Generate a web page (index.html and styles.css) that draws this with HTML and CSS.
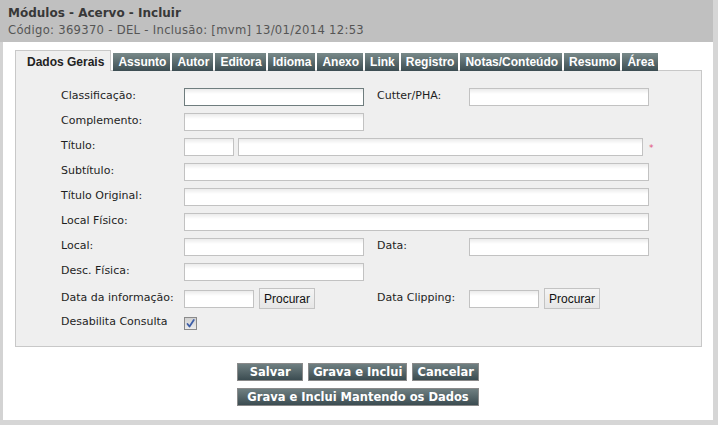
FILE: index.html
```html
<!DOCTYPE html>
<html lang="pt-BR">
<head>
<meta charset="utf-8">
<title>Módulos - Acervo - Incluir</title>
<link rel="stylesheet" href="styles.css">
</head>
<body>
<div class="window">
  <div class="header">
    <div class="title">Módulos - Acervo - Incluir</div>
    <div class="code">Código: 369370 - DEL - Inclusão: [mvm] 13/01/2014 12:53</div>
  </div>
  <div class="content">
    <div class="tabs">
      <span class="tab active">Dados Gerais</span>
      <span class="tab">Assunto</span>
      <span class="tab">Autor</span>
      <span class="tab">Editora</span>
      <span class="tab">Idioma</span>
      <span class="tab">Anexo</span>
      <span class="tab">Link</span>
      <span class="tab">Registro</span>
      <span class="tab">Notas/Conteúdo</span>
      <span class="tab">Resumo</span>
      <span class="tab">Área</span>
    </div>
    <div class="panel">
      <div class="form">
        <label class="lbl">Classificação:</label>
        <div class="field"><input class="inp w180 focus" type="text"></div>
        <label class="lbl rlbl">Cutter/PHA:</label>
        <div class="field"><input class="inp w180" type="text"></div>

        <label class="lbl">Complemento:</label>
        <div class="field span3"><input class="inp w180" type="text"></div>

        <label class="lbl">Título:</label>
        <div class="field span3"><input class="inp w50" type="text"><input class="inp w405" type="text"><span class="req">*</span></div>

        <label class="lbl">Subtítulo:</label>
        <div class="field span3"><input class="inp wfull" type="text"></div>

        <label class="lbl">Título Original:</label>
        <div class="field span3"><input class="inp wfull" type="text"></div>

        <label class="lbl">Local Físico:</label>
        <div class="field span3"><input class="inp wfull" type="text"></div>

        <label class="lbl">Local:</label>
        <div class="field"><input class="inp w180" type="text"></div>
        <label class="lbl rlbl">Data:</label>
        <div class="field"><input class="inp w180" type="text"></div>

        <label class="lbl">Desc. Física:</label>
        <div class="field span3"><input class="inp w180" type="text"></div>

        <label class="lbl">Data da informação:</label>
        <div class="field"><input class="inp w70" type="text"><button class="search" type="button">Procurar</button></div>
        <label class="lbl rlbl">Data Clipping:</label>
        <div class="field"><input class="inp w70" type="text"><button class="search" type="button">Procurar</button></div>

        <label class="lbl">Desabilita Consulta</label>
        <div class="field span3"><span class="check"><svg width="11" height="11" viewBox="0 0 11 11"><path d="M2.5 6 L4.5 8.5 L8.8 2" fill="none" stroke="#3d5ea8" stroke-width="1.8" stroke-linecap="round" stroke-linejoin="round"/></svg></span></div>
      </div>
    </div>
    <div class="actions">
      <div class="row">
        <button class="btn salvar" type="button">Salvar</button>
        <button class="btn" type="button">Grava e Inclui</button>
        <button class="btn" type="button">Cancelar</button>
      </div>
      <div class="row">
        <button class="btn wide" type="button">Grava e Inclui Mantendo os Dados</button>
      </div>
    </div>
  </div>
</div>
</body>
</html>
```
FILE: styles.css
```css
* { box-sizing: border-box; }
html, body { margin: 0; padding: 0; background: #ffffff; }
body { font-family: "DejaVu Sans", Verdana, sans-serif; font-size: 11px; color: #1e1e1e; }

.window {
  width: 718px;
  height: 425px;
  border-right: 5px solid #d6d6d6;
  border-bottom: 5px solid #d6d6d6;
  background: #ffffff;
}

.header {
  background: #c0c0c0;
  height: 42px;
  padding: 5px 8px 0 8px;
}
.title {
  font-weight: bold;
  font-size: 12px;
  line-height: 17px;
  color: #383838;
}
.code {
  font-size: 11.6px;
  letter-spacing: 0.3px;
  line-height: 16px;
  color: #555555;
}

.content {
  border-left: 3px solid #d3d3d3;
  height: 378px;
  padding: 8px 11px 0 12px;
}

.tabs {
  display: flex;
  align-items: flex-end;
  gap: 2px;
  position: relative;
  z-index: 1;
  margin-bottom: -1px;
}
.tab {
  font-family: "Liberation Sans", Arial, sans-serif;
  font-weight: bold;
  font-size: 12px;
  height: 18px;
  line-height: 18px;
  padding: 0 4px 0 5px;
  color: #ffffff;
  background: linear-gradient(#798a8a, #3c4d52);
}
.tab.active {
  height: 21px;
  padding: 2px 6px 0 11px;
  line-height: 18px;
  color: #222222;
  background: #efefef;
  border: 1px solid #c8c8c8;
  border-bottom: none;
}

.panel {
  background: #efefef;
  border: 1px solid #c8c8c8;
  height: 277px;
  padding: 17px 0 0 45px;
}

.form {
  display: grid;
  grid-template-columns: 123px 180px 105px 180px;
  row-gap: 7px;
  align-items: center;
}
.lbl {
  line-height: 16px;
  align-self: center;
  margin-top: -2px;
  white-space: nowrap;
}
.rlbl { padding-left: 13px; }
.field { display: flex; align-items: center; }
.span3 { grid-column: 2 / span 3; }

.inp {
  flex-shrink: 0;
  height: 18px;
  border: 1px solid #c2c2c2;
  background: linear-gradient(#ebebeb 0, #ffffff 5px);
  padding: 0 2px;
  margin: 0;
  font: inherit;
  outline: none;
}
.inp.focus { border-color: #6f7d7e; }
.w180 { width: 180px; }
.w50 { width: 50px; margin-right: 4px; }
.w405 { width: 405px; }
.wfull { width: 465px; }
.w70 { width: 70px; }

.req {
  flex-shrink: 0;
  color: #e2507c;
  font-size: 9px;
  line-height: 9px;
  margin-left: 6px;
  margin-top: 3px;
}

.search {
  flex-shrink: 0;
  margin-left: 5px;
  height: 21px;
  padding: 0 4px;
  font-family: "Liberation Sans", Arial, sans-serif;
  font-size: 12px;
  color: #111111;
  border: 1px solid #c3c3c3;
  background: linear-gradient(#f4f4f4, #e6e6e6);
}

.check {
  width: 13px;
  height: 13px;
  border: 1px solid #8a8a8a;
  background: linear-gradient(#d0d0d0, #ececec);
  display: flex;
  align-items: center;
  justify-content: center;
}

.actions {
  padding-top: 16px;
  display: flex;
  flex-direction: column;
  align-items: center;
  gap: 7px;
  margin-right: -11px;
  margin-left: -12px;
}
.row { display: flex; gap: 5px; }
.btn {
  font-family: "DejaVu Sans", Verdana, sans-serif;
  font-weight: bold;
  font-size: 11.5px;
  color: #ffffff;
  height: 18px;
  line-height: 16px;
  padding: 0 4px;
  margin: 0;
  border: 1px solid #8a8a8a;
  background: linear-gradient(#6f7f81, #3b4c51);
}
.btn.salvar { width: 66px; }
.btn.wide { padding: 0 9px; }
```
